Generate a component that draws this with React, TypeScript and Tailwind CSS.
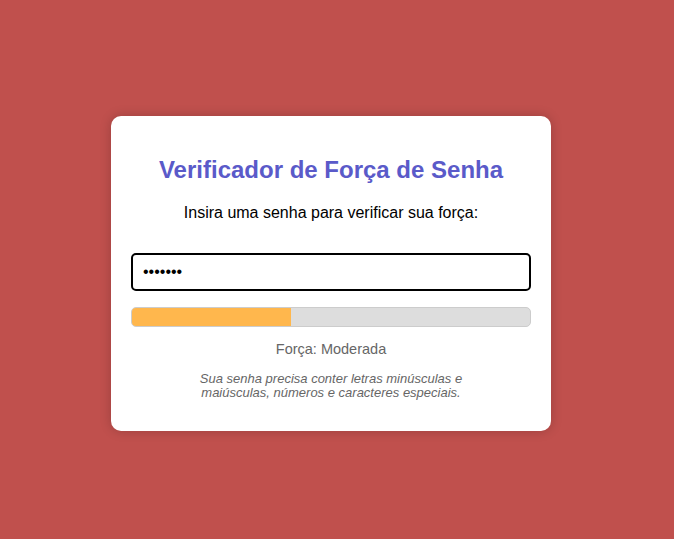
import { useState } from 'react'

function strength(pw: string) {
  let score = 0
  if (/[a-z]/.test(pw)) score++
  if (/[A-Z]/.test(pw)) score++
  if (/[0-9]/.test(pw)) score++
  if (/[^A-Za-z0-9]/.test(pw)) score++
  if (pw.length >= 8) score++
  return score
}

export default function App() {
  const [pw, setPw] = useState('abc1234')
  const s = strength(pw)
  const pct = Math.max(s, 2) * 20
  const label = s <= 1 ? 'Fraca' : s <= 3 ? 'Moderada' : 'Forte'

  return (
    <div className="h-[539px] flex items-center justify-center pr-3 pt-2 bg-[#c0504d] font-['Liberation_Sans',Arial,sans-serif]">
      <div className="w-[440px] bg-white rounded-[10px] p-5 text-center shadow-[0_0_12px_rgba(0,0,0,0.2)]">
        <h2 className="text-[24px] leading-[28px] font-bold text-[#5a5ac9] mt-5">Verificador de Força de Senha</h2>
        <p className="text-base leading-[18px] text-black mt-5">Insira uma senha para verificar sua força:</p>
        <input
          type="password"
          value={pw}
          onChange={e => setPw(e.target.value)}
          className="block w-full mt-[31px] h-[38px] px-2.5 border-2 border-black rounded-[5px] text-base outline-none"
        />
        <div className="mt-4 h-5 w-full bg-[#ddd] border border-[#ccc] rounded-[5px] overflow-hidden">
          <div className="h-full bg-[#ffb74d]" style={{ width: `${pct}%` }} />
        </div>
        <div className="mt-[14px] text-[14.5px] leading-4 text-[#666]">Força: {label}</div>
        <p className="mt-[15px] mx-auto w-[280px] text-[13px] leading-[14px] italic text-[#666] mb-[11px]">
          Sua senha precisa conter letras minúsculas e maiúsculas, números e caracteres especiais.
        </p>
      </div>
    </div>
  )
}
